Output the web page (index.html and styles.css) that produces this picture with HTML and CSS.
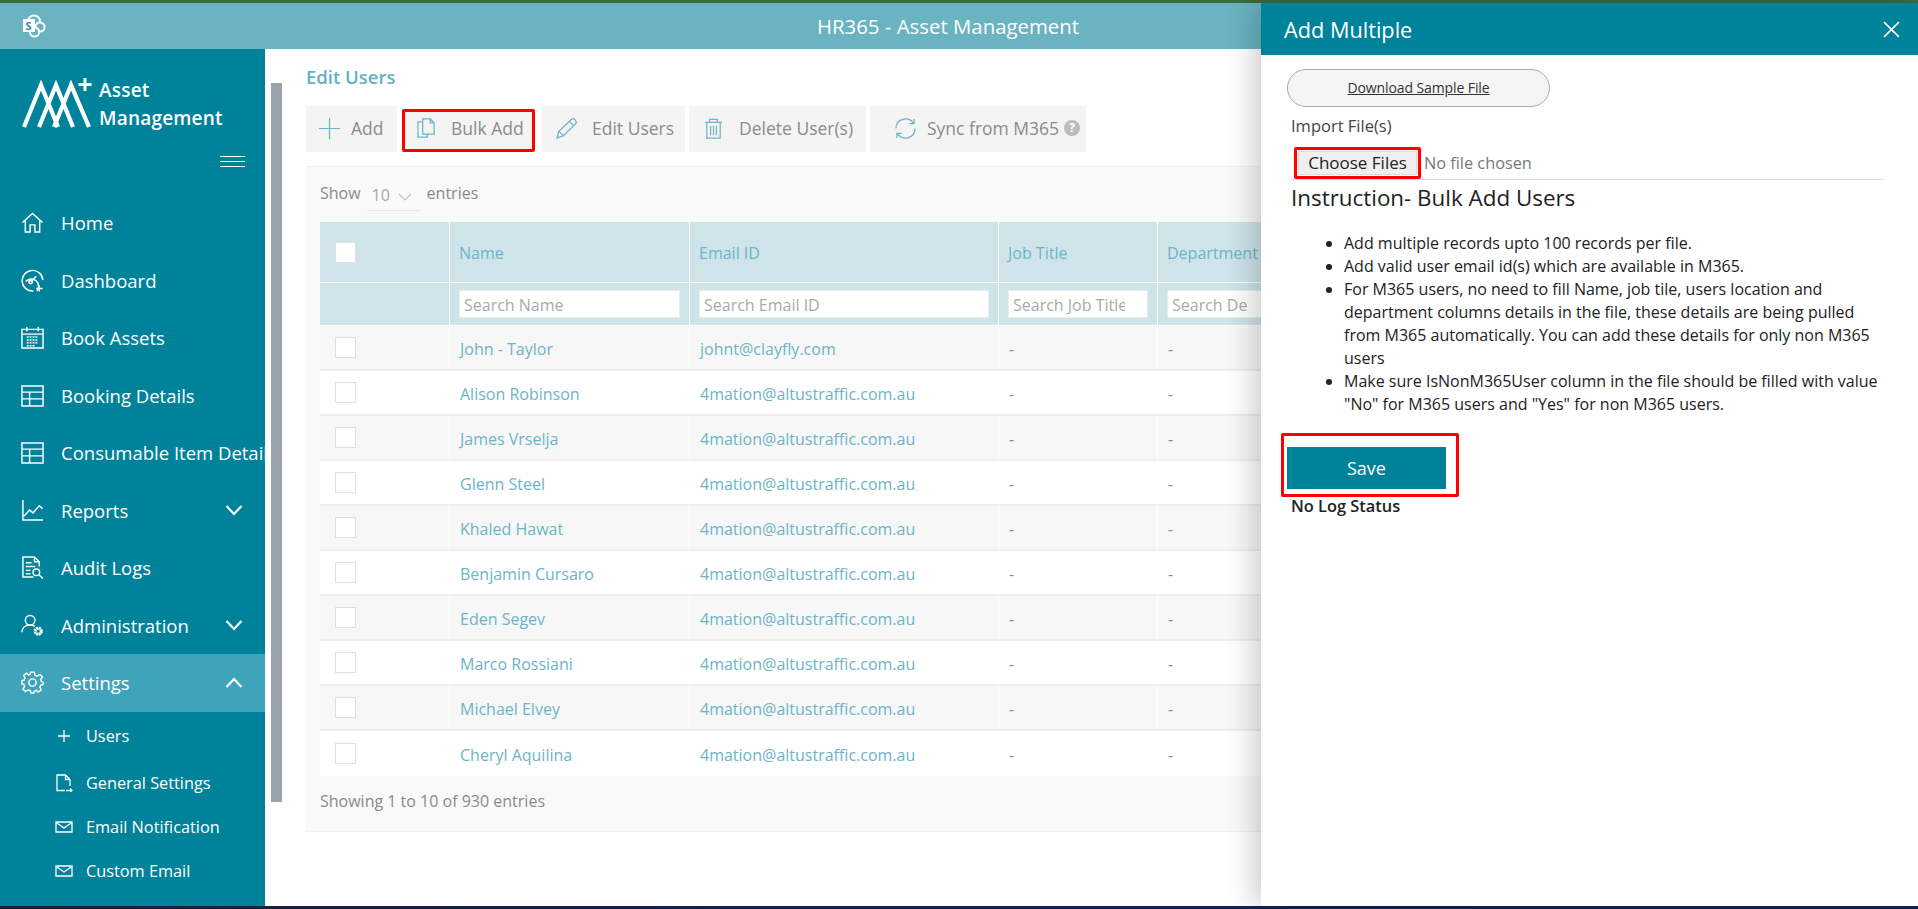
FILE: index.html
```html
<!DOCTYPE html>
<html>
<head>
    <title>HR365 - Asset Management</title>
    <link rel="stylesheet" href="styles.css">
</head>
<body>
    <div class="top-strip"></div>
    <header class="app-bar">
        <svg class="sp-logo" width="24" height="24" viewBox="0 0 24 24" fill="none" stroke="#fff" stroke-width="2">
            <circle cx="12" cy="7.5" r="6"/>
            <circle cx="18" cy="13" r="4.6" fill="#6ab3c1"/>
            <circle cx="12.5" cy="18" r="4.6" fill="#6ab3c1"/>
            <rect x="1" y="5" width="12" height="13" fill="#fff" stroke="none"/>
            <text x="3.6" y="15.6" font-size="11" font-weight="700" fill="#2f8ea1" stroke="none" font-family="Open Sans">S</text>
        </svg>
        <div class="app-title">HR365 - Asset Management</div>
    </header>

    <div class="layout">
        <nav class="sidebar">
            <div class="brand">
                <svg class="brand-mark" width="72" height="52" viewBox="0 0 72 52" fill="none" stroke="#fff">
                    <path d="M2 49 L19 7 L36 49 M17 49 L34 7 L51 49 M32 49 L49 7 L67 49" stroke-width="4.2"/>
                    <path d="M63 0 V13 M56.500 6.500 H69.500" stroke-width="3"/>
                </svg>
                <div class="brand-text">Asset<br>Management</div>
            </div>
            <div class="burger"><span></span><span></span><span></span></div>

            <a class="nav-item">
                <svg class="ico" viewBox="0 0 24 24"><path d="M1.500 12 L12 2.500 L22.500 12 M4.500 10 V22 H9.500 V14.500 H14.500 V22 H19.500 V10"/></svg>
                Home
            </a>
            <a class="nav-item">
                <svg class="ico" viewBox="0 0 24 24"><path d="M13 23 A10.800 10.800 0 1 1 22.800 11.500 M16.500 23 A7 7 0 1 0 5 13 M10 13.500 L16 7.500 M19 17 V23.500 M15.800 20.300 H22.500"/><circle cx="10" cy="13.500" r="1.800"/></svg>
                Dashboard
            </a>
            <a class="nav-item">
                <svg class="ico" viewBox="0 0 24 24"><path d="M1 3.500 H23 V23 H1 Z M1 8.500 H23 M6 1 V5.500 M18 1 V5.500"/><path class="dots" d="M6 11.500 H18 M6 14.500 H18 M6 17.500 H18 M6 20.500 H14"/></svg>
                Book Assets
            </a>
            <a class="nav-item">
                <svg class="ico" viewBox="0 0 24 24"><path d="M1 2 H23 V23 H1 Z M1 8.500 H23 M1 15.500 H23 M9 8.500 V23"/></svg>
                Booking Details
            </a>
            <a class="nav-item">
                <svg class="ico" viewBox="0 0 24 24"><path d="M1 2 H23 V23 H1 Z M1 8.500 H23 M1 15.500 H23 M9 8.500 V23"/></svg>
                Consumable Item Details
            </a>
            <a class="nav-item">
                <svg class="ico" viewBox="0 0 24 24"><path d="M2 1 V22 H23 M3 18 L9 11.500 L12.500 14.500 L19 7 L22.500 10"/></svg>
                Reports
                <svg class="caret" viewBox="0 0 18 12"><path d="M1.500 2 L9 10 L16.500 2"/></svg>
            </a>
            <a class="nav-item">
                <svg class="ico" viewBox="0 0 24 24"><path d="M13 22 H2 V1 H14 L19 6 V11 M14 1 V6 H19 M5 7 H11 M5 11 H15 M5 15 H10 M5 18.500 H10"/><circle cx="16" cy="17" r="3.500"/><path d="M18.500 19.500 L23 23.500"/></svg>
                Audit Logs
            </a>
            <a class="nav-item">
                <svg class="ico" viewBox="0 0 24 24"><circle cx="9.500" cy="6.500" r="5"/><path d="M1 19 C1 14 5 11.500 9.500 11.500 C11.500 11.500 13 12 14.500 13"/><circle cx="18" cy="18" r="3.200" stroke-width="3.200" stroke-dasharray="2 .5"/></svg>
                Administration
                <svg class="caret" viewBox="0 0 18 12"><path d="M1.500 2 L9 10 L16.500 2"/></svg>
            </a>
            <a class="nav-item active">
                <svg class="ico" viewBox="0 0 24 24"><circle cx="12" cy="12" r="3.800"/><path d="M10 1.200 H14 L14.600 4.500 L17 5.500 L19.800 3.600 L22.400 6.400 L20.400 9 L21.300 11 L23 12 V14 L20.400 15 L19.800 17 L21 20 L18 22 L15.800 20 L14 21 L13.500 23 H10.500 L9.800 20.500 L7.500 19.800 L4.500 21.500 L2 18.800 L3.800 16 L3 14 L1 13.500 V10 L3.500 9.200 L4.200 7 L2.800 4.500 L5.500 2.200 L8 4 L9.500 3.500 Z"/></svg>
                Settings
                <svg class="caret" viewBox="0 0 18 12"><path d="M1.500 10 L9 2 L16.500 10"/></svg>
            </a>
            <div class="sub-menu">
                <a class="sub-item first">
                    <svg class="sub-ico" viewBox="0 0 18 18"><path d="M9 3 V15 M3 9 H15"/></svg>
                    Users
                </a>
                <a class="sub-item">
                    <svg class="sub-ico" viewBox="0 0 18 18"><path d="M10 16.500 H2 V1 H10.500 L15 5.500 V12 M10.500 1 V5.500 H15 M11 16.500 H17 M15 14.500 L17 16.500 L15 18"/></svg>
                    General Settings
                </a>
                <a class="sub-item">
                    <svg class="sub-ico" viewBox="0 0 18 18"><path d="M1 4 H17 V14 H1 Z M1 4.500 L9 10 L17 4.500"/></svg>
                    Email Notification
                </a>
                <a class="sub-item">
                    <svg class="sub-ico" viewBox="0 0 18 18"><path d="M1 4 H17 V14 H1 Z M1 4.500 L9 10 L17 4.500"/></svg>
                    Custom Email
                </a>
            </div>
        </nav>

        <div class="gutter"><div class="thumb"></div></div>

        <main class="content">
            <h1 class="page-title">Edit Users</h1>
            <div class="toolbar">
                <button class="tool tool-add">
                    <svg class="tool-ico" viewBox="0 0 22 22"><path d="M11 0 V22 M0 11 H22"/></svg>
                    Add
                </button>
                <button class="tool tool-bulk">
                    <svg class="tool-ico" viewBox="0 0 22 22"><path d="M7 4 H2 V20 H12 V17 M7 1 H15 L19 5 V17 H7 Z M15 1 V5 H19"/></svg>
                    Bulk Add
                </button>
                <button class="tool tool-edit">
                    <svg class="tool-ico" viewBox="0 0 22 22"><path d="M1 21 L3 14 L16 1.500 C17 .5 18.500 .5 20 2 C21.500 3.500 21.500 5 20.500 6 L8 18.500 Z M3 14 L8 18.500 M14 3.500 L18.500 8"/></svg>
                    Edit Users
                </button>
                <button class="tool tool-delete">
                    <svg class="tool-ico" viewBox="0 0 22 22"><path d="M2 4.500 H20 M7 4.500 V1.500 H15 V4.500 M4 4.500 V21 H18 V4.500 M8 8 V18 M11 8 V18 M14 8 V18"/></svg>
                    Delete User(s)
                </button>
                <button class="tool tool-sync">
                    <svg class="tool-ico" viewBox="0 0 22 22"><path d="M1 11 A10 10 0 0 1 19 5 M21 11 A10 10 0 0 1 3 17 M20 1 V6 H15 M2 21 V16 H7"/></svg>
                    Sync from M365
                    <span class="help">?</span>
                </button>
            </div>

            <section class="card">
                <div class="table-top">
                    Show
                    <span class="page-size">10
                        <svg class="size-caret" viewBox="0 0 14 8"><path d="M1 1 L7 7 L13 1"/></svg>
                    </span>
                    entries
                </div>
                <table class="users">
                    <colgroup>
                        <col class="c-check"><col class="c-name"><col class="c-email"><col class="c-job"><col class="c-dept">
                    </colgroup>
                    <thead>
                        <tr class="head-row">
                            <th><span class="check"></span></th>
                            <th>Name</th>
                            <th>Email ID</th>
                            <th>Job Title</th>
                            <th>Department</th>
                        </tr>
                        <tr class="filter-row">
                            <th></th>
                            <th><input placeholder="Search Name"></th>
                            <th><input placeholder="Search Email ID"></th>
                            <th><input placeholder="Search Job Title"></th>
                            <th><input placeholder="Search Department"></th>
                        </tr>
                    </thead>
                    <tbody>
                        <tr><td><span class="check"></span></td><td class="link">John - Taylor</td><td class="link">johnt@clayfly.com</td><td>-</td><td>-</td></tr>
                        <tr><td><span class="check"></span></td><td class="link">Alison Robinson</td><td class="link">4mation@altustraffic.com.au</td><td>-</td><td>-</td></tr>
                        <tr><td><span class="check"></span></td><td class="link">James Vrselja</td><td class="link">4mation@altustraffic.com.au</td><td>-</td><td>-</td></tr>
                        <tr><td><span class="check"></span></td><td class="link">Glenn Steel</td><td class="link">4mation@altustraffic.com.au</td><td>-</td><td>-</td></tr>
                        <tr><td><span class="check"></span></td><td class="link">Khaled Hawat</td><td class="link">4mation@altustraffic.com.au</td><td>-</td><td>-</td></tr>
                        <tr><td><span class="check"></span></td><td class="link">Benjamin Cursaro</td><td class="link">4mation@altustraffic.com.au</td><td>-</td><td>-</td></tr>
                        <tr><td><span class="check"></span></td><td class="link">Eden Segev</td><td class="link">4mation@altustraffic.com.au</td><td>-</td><td>-</td></tr>
                        <tr><td><span class="check"></span></td><td class="link">Marco Rossiani</td><td class="link">4mation@altustraffic.com.au</td><td>-</td><td>-</td></tr>
                        <tr><td><span class="check"></span></td><td class="link">Michael Elvey</td><td class="link">4mation@altustraffic.com.au</td><td>-</td><td>-</td></tr>
                        <tr><td><span class="check"></span></td><td class="link">Cheryl Aquilina</td><td class="link">4mation@altustraffic.com.au</td><td>-</td><td>-</td></tr>
                    </tbody>
                </table>
                <div class="table-info">Showing 1 to 10 of 930 entries</div>
            </section>
        </main>
    </div>

    <div class="bottom-strip"></div>

    <aside class="panel">
        <div class="panel-head">
            <span>Add Multiple</span>
            <svg class="panel-close" viewBox="0 0 16 16"><path d="M1 1 L15 15 M15 1 L1 15"/></svg>
        </div>
        <a class="sample-link"><span>Download Sample File</span></a>
        <div class="import-label">Import File(s)</div>
        <div class="file-row">
            <div class="mark-file"><button class="file-btn">Choose Files</button></div>
            <span class="file-none">No file chosen</span>
        </div>
        <h2 class="instr-title">Instruction- Bulk Add Users</h2>
        <ul class="instr-list">
            <li>Add multiple records upto 100 records per file.</li>
            <li>Add valid user email id(s) which are available in M365.</li>
            <li>For M365 users, no need to fill Name, job tile, users location and department columns details in the file, these details are being pulled from M365 automatically. You can add these details for only non M365 users</li>
            <li>Make sure IsNonM365User column in the file should be filled with value "No" for M365 users and "Yes" for non M365 users.</li>
        </ul>
        <div class="mark-save"><button class="save-btn">Save</button></div>
        <div class="log-status">No Log Status</div>
    </aside>
</body>
</html>
```
FILE: styles.css
```css
* {
    box-sizing: border-box;
}
html, body {
    height: 100%;
}
body {
    margin: 0;
    position: relative;
    overflow: hidden;
    background: #fff;
    font-family: "Open Sans", "Noto Sans", sans-serif;
    display: flex;
    flex-direction: column;
}
.top-strip {
    height: 3px;
    background: #3d6b3f;
}
.bottom-strip {
    height: 3px;
    background: linear-gradient(90deg, #1c2028, #14205a 40%, #12225e);
}
.app-bar {
    height: 46px;
    flex: none;
    background: #6ab3c1;
    display: flex;
    align-items: center;
    justify-content: center;
    position: relative;
}
.sp-logo {
    position: absolute;
    left: 22px;
    top: 11px;
}
.app-title {
    color: #fff;
    font-size: 20.400px;
    margin-right: 22px;
}
.layout {
    flex: 1;
    display: flex;
    min-height: 0;
}

/* left menu */
.sidebar {
    width: 265px;
    flex: none;
    background: #00829a;
    color: #fff;
    overflow: hidden;
}
.brand {
    display: flex;
    align-items: flex-start;
    padding: 27px 0 0 22px;
    height: 103px;
}
.brand-mark {
    flex: none;
    margin-top: 2px;
}
.brand-text {
    margin: 0 0 0 5px;
    font-size: 19px;
    font-weight: 600;
    line-height: 28px;
    letter-spacing: .2px;
}
.burger {
    display: flex;
    flex-direction: column;
    gap: 4px;
    align-items: flex-end;
    padding: 4px 20px 0 0;
    height: 42px;
}
.burger span {
    width: 25px;
    height: 1px;
    background: #fff;
}
.nav-item {
    height: 57.5px;
    display: flex;
    align-items: center;
    padding: 0 22px 0 21px;
    font-size: 18.500px;
    white-space: nowrap;
}
.nav-item.active {
    background: #3fa4b9;
}
.ico {
    width: 23px;
    height: 23px;
    flex: none;
    margin-right: 17px;
    fill: none;
    stroke: #fff;
    stroke-width: 1.500;
}
.ico .dots {
    stroke-width: 1.600;
    stroke-dasharray: 2 1;
}
.caret {
    width: 18px;
    height: 12px;
    margin-left: auto;
    fill: none;
    stroke: #fff;
    stroke-width: 2.200;
}
.sub-menu {
    display: flex;
    flex-direction: column;
}
.sub-item {
    height: 44px;
    display: flex;
    align-items: center;
    padding-left: 55px;
    font-size: 16.300px;
    white-space: nowrap;
}
.sub-item.first {
    margin: 2px 0 3px;
}
.sub-ico {
    width: 18px;
    height: 18px;
    flex: none;
    margin-right: 13px;
    fill: none;
    stroke: #fff;
    stroke-width: 1.300;
}

.gutter {
    width: 41px;
    flex: none;
}
.thumb {
    width: 11px;
    height: 719px;
    margin: 34px 0 0 6px;
    background: #9aa3ab;
}

/* main content */
.content {
    flex: 1;
    min-width: 0;
    padding-top: 16px;
}
.page-title {
    margin: 0;
    height: 24px;
    line-height: 24px;
    font-size: 18.500px;
    font-weight: 600;
    color: #63b1c4;
}
.toolbar {
    display: flex;
    margin-top: 17px;
    height: 46px;
}
.tool {
    display: flex;
    align-items: center;
    height: 46px;
    border: 0;
    background: #f4f4f4;
    color: #8b8b8b;
    font: 17.500px "Open Sans", sans-serif;
    white-space: nowrap;
    padding: 0 0 2px;
}
.tool-ico {
    width: 21px;
    height: 21px;
    flex: none;
    fill: none;
    stroke: #6cb4c7;
    stroke-width: 1.300;
}
.tool-add {
    width: 91px;
    padding-left: 13px;
}
.tool-add .tool-ico {
    margin-right: 11px;
}
.tool-bulk {
    width: 133px;
    margin-left: 5px;
    margin-right: 7px;
    height: 43px;
    margin-top: 3px;
    border: 3px solid #f00;
    border-radius: 2px;
    padding: 0 0 5px 11px;
}
.tool-bulk .tool-ico {
    margin-right: 14px;
}
.tool-edit {
    width: 143px;
    padding-left: 14px;
}
.tool-edit .tool-ico {
    margin-right: 15px;
}
.tool-delete {
    width: 177px;
    margin-left: 4px;
    padding-left: 14px;
}
.tool-delete .tool-ico {
    margin-right: 15px;
}
.tool-sync {
    width: 216px;
    margin-left: 4px;
    padding-left: 25px;
}
.tool-sync .tool-ico {
    margin-right: 11px;
}
.help {
    width: 16px;
    height: 16px;
    margin-left: 5px;
    border-radius: 50%;
    background: #bdbdbd;
    color: #fff;
    font-size: 12px;
    font-weight: 700;
    line-height: 16px;
    text-align: center;
}
.card {
    margin-top: 14px;
    height: 666px;
    padding: 0 14px;
    background: #f9f9f9;
    border-top: 1px solid #f1f1f1;
    border-bottom: 1px solid #f1f1f1;
    color: #8a8a8a;
}
.table-top {
    height: 55px;
    display: flex;
    align-items: flex-start;
    padding-top: 13px;
    font-size: 16px;
    line-height: 26px;
}
.page-size {
    width: 53px;
    height: 31px;
    margin: 0 7px 0 6px;
    position: relative;
    padding: 2px 0 0 5px;
    background: #fafafa;
    border-bottom: 1px solid #e8e8e8;
    color: #a8a8a8;
}
.size-caret {
    position: absolute;
    right: 8px;
    top: 13px;
    width: 14px;
    height: 8px;
    fill: none;
    stroke: #c4c4c4;
    stroke-width: 1.200;
}
.users {
    table-layout: fixed;
    width: 961px;
    border-collapse: separate;
    border-spacing: 0;
    font-size: 16px;
}
.c-check { width: 130px; }
.c-name { width: 240px; }
.c-email { width: 309px; }
.c-job { width: 159px; }
.c-dept { width: 123px; }
.users th {
    background: #cee4e9;
    color: #6cb4c7;
    font-weight: 400;
    text-align: left;
    padding: 0 9px;
    border-right: 1px solid #fff;
    border-bottom: 1px solid #fff;
    overflow: hidden;
    white-space: nowrap;
}
.head-row th {
    height: 61px;
    padding-top: 1px;
}
.filter-row th {
    height: 43px;
}
.users th:first-child, .users td:first-child {
    padding-left: 15px;
}
.users .head-row th:first-child, .users td:first-child {
    padding-top: 0;
}
.users th input {
    display: block;
    width: 100%;
    height: 28px;
    padding: 1px 22px 0 4px;
    border: 1px solid #e6eef0;
    background: #fff;
    font: 16px "Open Sans", sans-serif;
}
.users th input::placeholder {
    color: #aaa;
}
.users td {
    height: 45px;
    padding: 2px 10px 0;
    border-right: 1px solid #fff;
    border-bottom: 2px solid #eee;
    background: #fff;
    white-space: nowrap;
    overflow: hidden;
}
.users tbody tr:nth-child(odd) td {
    background: #f7f7f7;
}
.users tbody tr:last-child td {
    border-bottom: 0;
}
.users .link {
    color: #6cb4c7;
}
.check {
    display: block;
    width: 21px;
    height: 21px;
    background: #fff;
    border: 1px solid #e0e0e0;
}
.table-info {
    padding-top: 14px;
    font-size: 16px;
}

/* slide-in panel, lies over the table */
.panel {
    position: absolute;
    top: 3px;
    right: 0;
    bottom: 3px;
    width: 657px;
    background: #fff;
    box-shadow: -6px 0 28px rgba(0, 0, 0, .22);
    color: #222;
}
.panel-head {
    height: 52px;
    background: #00829a;
    color: #fff;
    font-size: 21.700px;
    display: flex;
    align-items: center;
    justify-content: space-between;
    padding: 0 18px 0 23px;
}
.panel-close {
    width: 17px;
    height: 17px;
    fill: none;
    stroke: #fff;
    stroke-width: 1.500;
}
.sample-link {
    display: flex;
    align-items: center;
    justify-content: center;
    width: 263px;
    height: 38px;
    margin: 14px 0 0 26px;
    background: #f5f5f5;
    border: 1px solid #aaa;
    border-radius: 19px;
    color: #333;
    font-size: 14px;
    letter-spacing: -.1px;
    text-decoration: underline;
    padding-bottom: 2px;
}
.import-label {
    margin: 7px 0 0 30px;
    height: 24px;
    line-height: 24px;
    font-size: 16.500px;
    color: #444;
}
.file-row {
    margin: 9px 34px 0 30px;
    height: 33px;
    padding-left: 3px;
    border-bottom: 1px solid #ddd;
    display: flex;
    align-items: flex-start;
    gap: 3px;
}
.mark-file {
    width: 127px;
    height: 32px;
    padding: 1px;
    border: 3px solid #f00;
    border-radius: 2px;
}
.file-btn {
    width: 100%;
    height: 24px;
    padding: 0;
    border: 1px solid #ddd;
    background: #efefef;
    color: #222;
    font: 17px/20px "Open Sans", sans-serif;
    white-space: nowrap;
}
.file-none {
    font-size: 16.300px;
    line-height: 32px;
    color: #777;
}
.instr-title {
    margin: 3px 0 0 30px;
    height: 30px;
    line-height: 30px;
    font-size: 22.400px;
    font-weight: 400;
}
.instr-list {
    margin: 19px 28px 0 30px;
    padding: 0 0 0 53px;
    font-size: 16px;
    line-height: 23px;
}
.mark-save {
    width: 178px;
    height: 64px;
    margin: 17px 0 0 20px;
    padding: 11px 0 0 3px;
    border: 3px solid #f00;
    border-radius: 2px;
}
.save-btn {
    display: block;
    width: 159px;
    height: 42px;
    border: 0;
    background: #00829a;
    color: #fff;
    font: 18px "Open Sans", sans-serif;
}
.log-status {
    margin: -1px 0 0 30px;
    font-size: 16.400px;
    font-weight: 600;
    line-height: 20px;
}
```
